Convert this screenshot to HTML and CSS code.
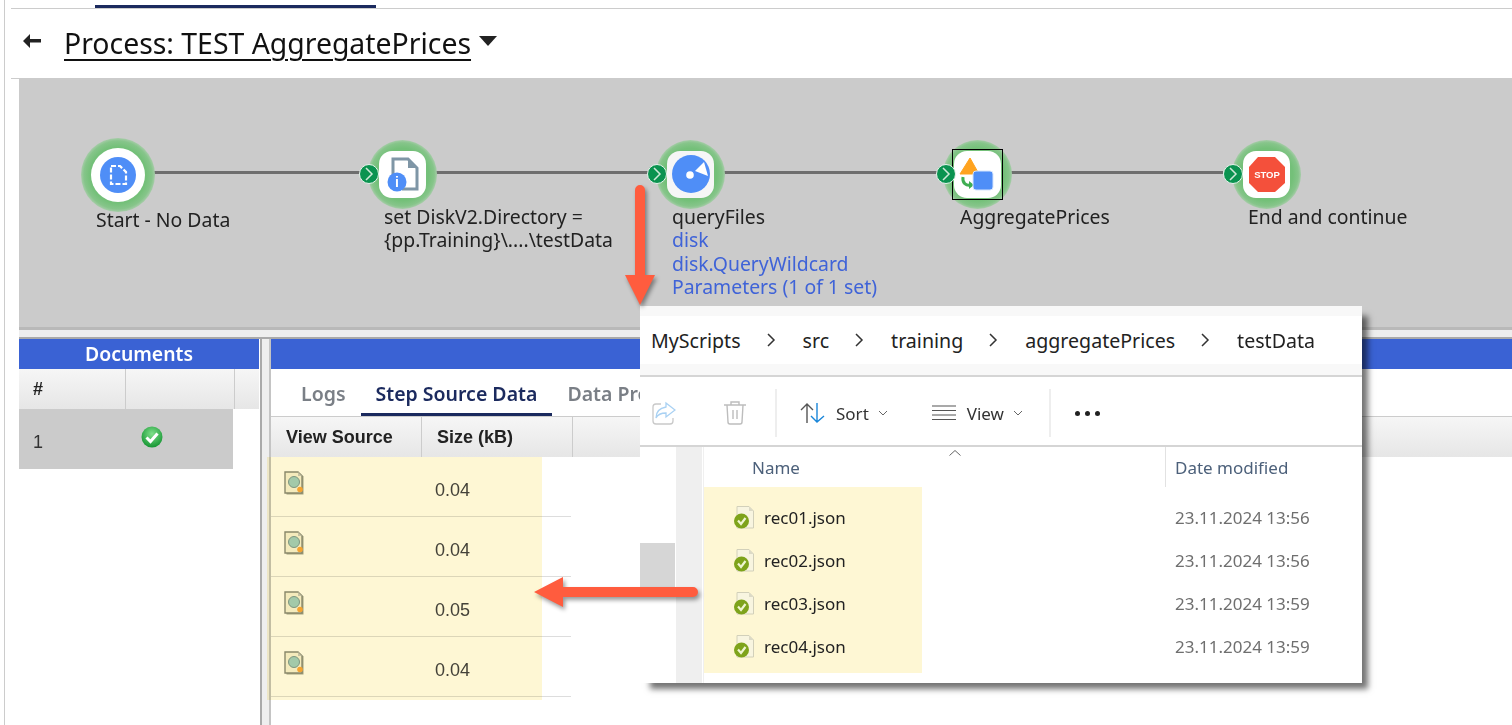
FILE: index.html
```html
<!DOCTYPE html>
<html lang="en">
<head>
    <meta charset="UTF-8">
    <meta name="viewport" content="width=device-width, initial-scale=1.0">
    <title>Process: TEST AggregatePrices</title>
    <link rel="stylesheet" href="styles.css">
</head>
<body>
    <div class="app">
        <div class="topbar"><div class="topbar-tab"></div></div>

        <header class="page-head">
            <svg class="back-icon" width="18" height="14" viewBox="0 0 18 14"><path d="M0 7 7 0v5h11v3.500H7V14z" fill="#222"/></svg>
            <h1 class="page-title">Process: TEST AggregatePrices</h1>
            <svg class="title-caret" width="18" height="10" viewBox="0 0 18 10"><path d="M0 0h18l-9 10z" fill="#222"/></svg>
        </header>

        <!-- Process diagram -->
        <section class="canvas">
            <div class="wire wire-1"></div>
            <div class="wire wire-2"></div>
            <div class="wire wire-3"></div>
            <div class="wire wire-4"></div>

            <div class="step step-1">
                <div class="halo halo-big">
                    <svg class="tile-round" width="54" height="54" viewBox="0 0 54 54">
                        <circle cx="27" cy="27" r="27" fill="#fff"/>
                        <circle cx="27" cy="27" r="18" fill="#4f8ef7"/>
                        <path d="M20 18h9l6 6v12H20z" fill="none" stroke="#fff" stroke-width="2.200" stroke-dasharray="5 2"/>
                    </svg>
                </div>
                <div class="step-label">Start - No Data</div>
            </div>

            <div class="step step-2">
                <div class="halo">
                    <div class="tile">
                        <svg width="47" height="47" viewBox="0 0 47 47">
                            <path d="M14 26V8h15l9 9v21H23" fill="none" stroke="#7f96a6" stroke-width="3"/>
                            <path d="M29 8v9h9z" fill="#7f96a6"/>
                            <circle cx="18" cy="31" r="9.500" fill="#4f8ef7"/>
                            <text x="18" y="36" class="badge-i">i</text>
                        </svg>
                    </div>
                </div>
                <div class="step-label">set DiskV2.Directory =<br>{pp.Training}\....\testData</div>
            </div>

            <div class="step step-3">
                <div class="halo">
                    <div class="tile tile-grey">
                        <svg width="47" height="47" viewBox="0 0 47 47">
                            <circle cx="24" cy="23" r="19" fill="#4f8ef7"/>
                            <circle cx="23" cy="24" r="3.800" fill="#fff"/>
                            <path d="M28 20 37 11l4 14z" fill="#fff"/>
                        </svg>
                    </div>
                </div>
                <div class="step-label">queryFiles
                    <a class="step-link">disk</a>
                    <a class="step-link">disk.QueryWildcard</a>
                    <a class="step-link">Parameters (1 of 1 set)</a>
                </div>
            </div>

            <div class="step step-4">
                <div class="halo">
                    <div class="tile tile-selected">
                        <svg width="47" height="47" viewBox="0 0 47 47">
                            <path d="M16 7 25 23H6z" fill="#ffa31f" stroke="#ffa31f" stroke-linejoin="round"/>
                            <path d="M9 26c-1 6 3 9 8 8" fill="none" stroke="#3fae52" stroke-width="3"/>
                            <path d="M15 30l5 4-5 4z" fill="#3fae52"/>
                            <rect x="19" y="20" width="20" height="19" rx="3" fill="#4f8ef7" stroke="#d6e5fd"/>
                        </svg>
                    </div>
                </div>
                <div class="step-label">AggregatePrices</div>
            </div>

            <div class="step step-5">
                <div class="halo">
                    <div class="tile">
                        <svg width="47" height="47" viewBox="0 0 47 47">
                            <path d="M15 6h17l10 10v16L32 41H15L6 32V16z" fill="#f4503b"/>
                            <text x="24" y="27" class="stop-text">STOP</text>
                        </svg>
                    </div>
                </div>
                <div class="step-label">End and continue</div>
            </div>

            <div class="port port-1"><svg width="10" height="14" viewBox="0 0 10 14"><path d="M2 1l6 6-6 6" fill="none" stroke="#cfe9d8" stroke-width="1.500"/></svg></div>
            <div class="port port-2"><svg width="10" height="14" viewBox="0 0 10 14"><path d="M2 1l6 6-6 6" fill="none" stroke="#cfe9d8" stroke-width="1.500"/></svg></div>
            <div class="port port-3"><svg width="10" height="14" viewBox="0 0 10 14"><path d="M2 1l6 6-6 6" fill="none" stroke="#cfe9d8" stroke-width="1.500"/></svg></div>
            <div class="port port-4"><svg width="10" height="14" viewBox="0 0 10 14"><path d="M2 1l6 6-6 6" fill="none" stroke="#cfe9d8" stroke-width="1.500"/></svg></div>
        </section>

        <div class="split-h"></div>

        <div class="panels">
            <!-- Documents -->
            <aside class="docs">
                <div class="panel-title">Documents</div>
                <div class="docs-head">
                    <div class="docs-num">#</div>
                    <div class="docs-status"></div>
                    <div class="docs-rest"></div>
                </div>
                <div class="docs-row">
                    <div class="docs-num">1</div>
                    <svg class="docs-check" width="22" height="22" viewBox="0 0 22 22">
                        <defs>
                            <radialGradient id="okGrad" cx="50%" cy="35%" r="70%">
                                <stop offset="0" stop-color="#7fe08a"/>
                                <stop offset="1" stop-color="#0d8f2c"/>
                            </radialGradient>
                        </defs>
                        <circle cx="11" cy="11" r="10.500" fill="url(#okGrad)"/>
                        <path d="M5.500 11.500 9.500 15.500 16.500 7.500" fill="none" stroke="#fff" stroke-width="3"/>
                    </svg>
                </div>
            </aside>

            <div class="split-v"></div>

            <!-- Step details -->
            <main class="details">
                <div class="panel-title"></div>
                <nav class="tabs">
                    <span class="tab">Logs</span>
                    <span class="tab tab-active">Step Source Data</span>
                    <span class="tab">Data Properties</span>
                </nav>
                <div class="src-head">
                    <div class="src-cell">View Source</div>
                    <div class="src-cell">Size (kB)</div>
                </div>
                <div class="src-row">
                    <svg class="src-icon" width="22" height="24"><use href="#srcDoc"/></svg>
                    <div class="src-size">0.04</div>
                </div>
                <div class="src-row">
                    <svg class="src-icon" width="22" height="24"><use href="#srcDoc"/></svg>
                    <div class="src-size">0.04</div>
                </div>
                <div class="src-row">
                    <svg class="src-icon" width="22" height="24"><use href="#srcDoc"/></svg>
                    <div class="src-size">0.05</div>
                </div>
                <div class="src-row">
                    <svg class="src-icon" width="22" height="24"><use href="#srcDoc"/></svg>
                    <div class="src-size">0.04</div>
                </div>
            </main>
        </div>
    </div>

    <div class="source-mark"></div>

    <!-- File explorer window pasted over the page -->
    <div class="explorer">
        <div class="crumbs">
            <div class="crumbs-inner">
                <span class="crumb">MyScripts</span>
                <svg class="crumb-sep" width="10" height="16" viewBox="0 0 10 16"><path d="M2 2l6 6-6 6" fill="none" stroke="#333" stroke-width="1.500"/></svg>
                <span class="crumb">src</span>
                <svg class="crumb-sep" width="10" height="16" viewBox="0 0 10 16"><path d="M2 2l6 6-6 6" fill="none" stroke="#333" stroke-width="1.500"/></svg>
                <span class="crumb">training</span>
                <svg class="crumb-sep" width="10" height="16" viewBox="0 0 10 16"><path d="M2 2l6 6-6 6" fill="none" stroke="#333" stroke-width="1.500"/></svg>
                <span class="crumb">aggregatePrices</span>
                <svg class="crumb-sep" width="10" height="16" viewBox="0 0 10 16"><path d="M2 2l6 6-6 6" fill="none" stroke="#333" stroke-width="1.500"/></svg>
                <span class="crumb">testData</span>
            </div>
        </div>

        <div class="toolbar">
            <svg class="tool-share" width="24" height="24" viewBox="0 0 24 24">
                <path d="M9 3H4a3 3 0 0 0-3 3v14a3 3 0 0 0 3 3h14a3 3 0 0 0 3-3v-3" fill="none" stroke="#c9c9c9" stroke-width="1.300"/>
                <path d="M14 2l9 7-9 7v-4c-5 0-8 1-10 5 0-7 4-10 10-11z" fill="#fff" stroke="#a9d1f3" stroke-width="1.300"/>
            </svg>
            <svg class="tool-trash" width="22" height="24" viewBox="0 0 22 24">
                <path d="M0 4h22M7 4V1h8v3M3 4l1 17a2 2 0 0 0 2 2h10a2 2 0 0 0 2-2l1-17M9 9v9M13 9v9" fill="none" stroke="#bdbdbd" stroke-width="1.400"/>
            </svg>
            <div class="tool-divider tool-divider-a"></div>
            <svg class="tool-sort" width="25" height="20" viewBox="0 0 25 20">
                <path d="M7 20V1M1 7l6-6 6 6" fill="none" stroke="#555" stroke-width="1.400"/>
                <path d="M17 0v19M11 13l6 6 7-6" fill="none" stroke="#1a86d9" stroke-width="1.400"/>
            </svg>
            <span class="tool-text">Sort</span>
            <svg class="tool-chev" width="10" height="6" viewBox="0 0 10 6"><path d="M1 1l4 4 4-4" fill="none" stroke="#666"/></svg>
            <svg class="tool-view" width="24" height="16" viewBox="0 0 24 16">
                <path d="M0 1h24M0 5.500h24M0 10h24M0 14.500h24" stroke="#555" stroke-width="1.200"/>
            </svg>
            <span class="tool-text">View</span>
            <svg class="tool-chev" width="10" height="6" viewBox="0 0 10 6"><path d="M1 1l4 4 4-4" fill="none" stroke="#666"/></svg>
            <div class="tool-divider tool-divider-b"></div>
            <div class="tool-more"><i></i><i></i><i></i></div>
        </div>

        <div class="ex-body">
            <div class="ex-gutter"><div class="ex-thumb"></div></div>
            <div class="ex-strip"></div>
            <div class="ex-main">
                <svg class="sort-caret" width="12" height="6" viewBox="0 0 12 6"><path d="M0.500 5.500 6 0.500l5.500 5" fill="none" stroke="#666"/></svg>
                <div class="ex-head">
                    <div class="ex-col-name">Name</div>
                    <div class="ex-col-date">Date modified</div>
                </div>
                <div class="ex-rows">
                    <div class="ex-row">
                        <svg class="file-icon" width="20" height="24"><use href="#jsonFile"/></svg>
                        <span class="file-name">rec01.json</span>
                        <span class="file-date">23.11.2024 13:56</span>
                    </div>
                    <div class="ex-row">
                        <svg class="file-icon" width="20" height="24"><use href="#jsonFile"/></svg>
                        <span class="file-name">rec02.json</span>
                        <span class="file-date">23.11.2024 13:56</span>
                    </div>
                    <div class="ex-row">
                        <svg class="file-icon" width="20" height="24"><use href="#jsonFile"/></svg>
                        <span class="file-name">rec03.json</span>
                        <span class="file-date">23.11.2024 13:59</span>
                    </div>
                    <div class="ex-row">
                        <svg class="file-icon" width="20" height="24"><use href="#jsonFile"/></svg>
                        <span class="file-name">rec04.json</span>
                        <span class="file-date">23.11.2024 13:59</span>
                    </div>
                </div>
            </div>
        </div>
    </div>

    <!-- Callout arrows -->
    <svg class="arrow arrow-down" width="30" height="122" viewBox="0 0 30 122">
        <path d="M15 1a5 5 0 0 1 5 5v85h10L15 121 0 91h10V6a5 5 0 0 1 5-5z" fill="#ff5c3e"/>
    </svg>
    <svg class="arrow arrow-left" width="164" height="30" viewBox="0 0 164 30">
        <path d="M0 15 29 0v10h130a5 5 0 0 1 0 10H29v10z" fill="#ff5c3e"/>
    </svg>

    <!-- Shared icons -->
    <svg class="icon-defs" width="0" height="0">
        <defs>
            <g id="srcDoc">
                <path d="M2.500 2.500h14l3 3v18h-17z" fill="#a4a796"/>
                <path d="M1 1h13l4 4v17H1z" fill="#f5f3e2" stroke="#8a8d80" stroke-width="1.400"/>
                <path d="M14 1v4h4z" fill="#c6c8c4"/>
                <circle cx="10" cy="11" r="5.500" fill="#a3d0cc" stroke="#7f9b98"/>
                <circle cx="16" cy="18.500" r="2.800" fill="#f4a93a"/>
            </g>
            <g id="jsonFile">
                <path d="M3 0.500h12l4.500 4.500v17H3z" fill="#f8f5e0" stroke="#d2d0ba"/>
                <path d="M15 0.500V5h4.500z" fill="#dcdac6"/>
                <circle cx="7.500" cy="15" r="7.500" fill="#7ea31b"/>
                <path d="M4 14.500 7 18 11.500 12" fill="none" stroke="#eef5d0" stroke-width="2.200"/>
            </g>
        </defs>
    </svg>
</body>
</html>
```

FILE: styles.css
```css
html, body {
    margin: 0;
    padding: 0;
    height: 725px;
    overflow: hidden;
    background: #fff;
}

body {
    position: relative;
    font-family: "Noto Sans", sans-serif;
    color: #222;
}

.app {
    margin-left: 4px;
    height: 725px;
    border-left: 1px solid #ccc;
    box-sizing: border-box;
}

/* Top */
.topbar {
    height: 9px;
    margin-left: 6px;
    border-bottom: 1px solid #ccc;
    box-sizing: border-box;
}

.topbar-tab {
    width: 281px;
    height: 3px;
    margin-left: 84px;
    position: relative;
    top: 5px;
    background: #1b2a5e;
}

.page-head {
    display: flex;
    align-items: flex-start;
    height: 70px;
    margin-left: 6px;
    border-bottom: 1px solid #ccc;
    box-sizing: border-box;
}

.back-icon {
    margin: 25px 0 0 12px;
}

.page-title {
    margin: 13px 0 0 23px;
    font-size: 28.400px;
    font-weight: 400;
    line-height: 42px;
    color: #111;
    text-decoration: underline;
    text-decoration-thickness: 2px;
    text-underline-offset: 5px;
}

.title-caret {
    margin: 27px 0 0 8px;
}

/* Diagram */
.canvas {
    position: relative;
    height: 249px;
    margin-left: 14px;
    margin-top: -1px;
    background: #cbcbcb;
}

.wire {
    position: absolute;
    top: 93px;
    height: 3px;
    background: #6e6e6e;
}

.wire-1 { left: 125px; width: 216px; }
.wire-2 { left: 408px; width: 222px; }
.wire-3 { left: 697px; width: 222px; }
.wire-4 { left: 984px; width: 220px; }

.step {
    position: absolute;
    top: 62px;
}

.step-1 { left: 62px; top: 60px; }
.step-2 { left: 349px; }
.step-3 { left: 637px; }
.step-4 { left: 924px; }
.step-5 { left: 1213px; }

.halo {
    display: flex;
    align-items: center;
    justify-content: center;
    width: 69px;
    height: 69px;
    border-radius: 50%;
    background: radial-gradient(circle closest-side, #74c079 76%, #86c58a 92%, #a6cca8 100%);
}

.halo-big {
    width: 74px;
    height: 74px;
}

.tile {
    position: relative;
    width: 47px;
    height: 47px;
    border-radius: 13px;
    background: #fff;
}

.tile svg {
    display: block;
}

.tile-grey {
    background: #f6f6f6;
}

.tile-selected::after {
    content: "";
    position: absolute;
    top: -2px;
    left: -2px;
    right: -2px;
    bottom: -2px;
    border: 1.500px solid #000;
}

.step-label {
    margin: -4px 0 0 16px;
    font-size: 19.400px;
    line-height: 23.300px;
    white-space: nowrap;
    color: #222;
}

.step-1 .step-label {
    margin: -4px 0 0 15px;
}

.step-4 .step-label {
    margin-left: 17px;
}

.step-link {
    display: block;
    color: #3f63d8;
}

.badge-i {
    font: 700 14px "Liberation Sans", sans-serif;
    fill: #fff;
    text-anchor: middle;
}

.stop-text {
    font: 700 9.500px "Liberation Sans", sans-serif;
    fill: #fff;
    text-anchor: middle;
}

.port {
    position: absolute;
    top: 86px;
    display: flex;
    align-items: center;
    justify-content: center;
    width: 20px;
    height: 20px;
    box-sizing: border-box;
    border: 1px solid #e8f3ec;
    border-radius: 50%;
    background: #0b9350;
}

.port-1 { left: 340px; }
.port-2 { left: 628px; }
.port-3 { left: 917px; }
.port-4 { left: 1204px; }

/* Horizontal splitter */
.split-h {
    height: 12px;
    margin-left: 14px;
    box-sizing: border-box;
    border-top: 3px solid #b9b9b9;
    border-bottom: 2px solid #a9a9a9;
    background: #eee;
}

.panels {
    display: flex;
    height: 386px;
    margin-left: 14px;
}

.panel-title {
    height: 30px;
    font-size: 19.400px;
    font-weight: 600;
    line-height: 30px;
    text-align: center;
    color: #fff;
    background: #3a62d4;
}

/* Documents */
.docs {
    width: 240px;
    flex: none;
}

.docs-head {
    display: flex;
    height: 40px;
    background: linear-gradient(#f6f6f6, #e6e6e6);
}

.docs-num {
    width: 107px;
    padding-left: 14px;
    box-sizing: border-box;
    font-family: "Liberation Sans", sans-serif;
    font-size: 18px;
}

.docs-head .docs-num {
    font-weight: 700;
    line-height: 40px;
    border-right: 1px solid #ccc;
}

.docs-status {
    width: 108px;
    border-right: 1px solid #ccc;
}

.docs-rest {
    flex: 1;
}

.docs-row {
    display: flex;
    width: 214px;
    height: 60px;
    background: #cbcbcb;
}

.docs-row .docs-num {
    padding-top: 23px;
    line-height: 21px;
    color: #333;
}

.docs-check {
    margin: 17px 0 0 15px;
}

/* Vertical splitter */
.split-v {
    width: 11px;
    flex: none;
    box-sizing: border-box;
    margin-left: 1px;
    border-left: 2px solid #a9a9a9;
    border-right: 2px solid #c4c4c4;
    background: #eee;
}

/* Step details */
.details {
    flex: 1;
    min-width: 0;
}

.tabs {
    display: flex;
    height: 48px;
    box-sizing: border-box;
    padding-left: 15px;
    border-bottom: 1px solid #ccc;
}

.tab {
    height: 47px;
    padding: 0 15px;
    box-sizing: border-box;
    font-size: 19.500px;
    font-weight: 600;
    line-height: 50px;
    color: #7a7f86;
    white-space: nowrap;
}

.tab-active {
    color: #1b2a5e;
    border-bottom: 3px solid #1b2a5e;
}

.src-head {
    display: flex;
    height: 40px;
    background: linear-gradient(#f6f6f6, #e6e6e6);
}

.src-cell {
    width: 151px;
    padding-left: 15px;
    box-sizing: border-box;
    border-right: 1px solid #ccc;
    font-family: "Liberation Sans", sans-serif;
    font-size: 18px;
    font-weight: 700;
    line-height: 40px;
    color: #222;
}

.src-row {
    display: flex;
    width: 300px;
    height: 60px;
    box-sizing: border-box;
    border-bottom: 1px solid #ddd;
}

.src-icon {
    flex: none;
    margin: 14px 0 0 13px;
}

.src-size {
    margin: 23px 0 0 129px;
    font-family: "Liberation Sans", sans-serif;
    font-size: 18px;
    line-height: 21px;
    color: #444;
}

/* Yellow highlight over the source rows */
.source-mark {
    position: absolute;
    left: 267px;
    top: 457px;
    width: 275px;
    height: 243px;
    background: #fef7d4;
    mix-blend-mode: multiply;
}

/* Explorer window */
.explorer {
    position: absolute;
    left: 640px;
    top: 306px;
    width: 722px;
    height: 377px;
    display: flex;
    flex-direction: column;
    background: #fff;
    box-shadow: 8px 8px 6px -2px rgba(0, 0, 0, 0.55);
    font-family: "Noto Sans", sans-serif;
}

.crumbs {
    height: 71px;
    flex: none;
    box-sizing: border-box;
    padding: 10px 0 11px;
    border-bottom: 2px solid #d5d5d5;
    background: #f8f8f8;
}

.crumbs-inner {
    display: flex;
    align-items: center;
    height: 48px;
    padding-left: 11px;
    background: #fff;
}

.crumb {
    font-size: 19.600px;
    color: #222;
    white-space: nowrap;
}

.crumb-sep {
    margin: 0 27px 0 25px;
}

.toolbar {
    display: flex;
    align-items: center;
    height: 70px;
    flex: none;
    box-sizing: border-box;
    padding-top: 4px;
    border-bottom: 2px solid #d5d5d5;
}

.tool-share {
    margin-left: 12px;
}

.tool-trash {
    margin-left: 48px;
}

.tool-divider {
    width: 2px;
    height: 48px;
    background: #eee;
}

.tool-divider-a {
    margin: 0 23px 0 29px;
}

.tool-divider-b {
    margin: 0 24px 0 26px;
}

.tool-sort {
    flex: none;
}

.tool-text {
    margin-left: 11px;
    font-size: 17px;
    color: #333;
}

.tool-chev {
    margin-left: 9px;
}

.tool-view {
    margin-left: 44px;
}

.tool-more {
    display: flex;
    gap: 5px;
}

.tool-more i {
    width: 5px;
    height: 5px;
    border-radius: 50%;
    background: #222;
}

.ex-body {
    display: flex;
    flex: 1;
}

.ex-gutter {
    width: 36px;
    flex: none;
    padding-top: 96px;
    box-sizing: border-box;
}

.ex-thumb {
    width: 35px;
    height: 44px;
    background: #d6d6d6;
}

.ex-strip {
    width: 26px;
    flex: none;
    background: #efefef;
}

.ex-main {
    position: relative;
    flex: 1;
    margin-left: 1px;
    border-left: 1px solid #f0f0f0;
}

.sort-caret {
    position: absolute;
    left: 245px;
    top: 3px;
}

.ex-head {
    display: flex;
    height: 40px;
    font-size: 17px;
    line-height: 42px;
    color: #4c607a;
}

.ex-col-name {
    width: 462px;
    padding-left: 48px;
    box-sizing: border-box;
    border-right: 1px solid #e2e2e2;
}

.ex-col-date {
    padding-left: 9px;
}

.ex-rows {
    position: relative;
    padding-top: 9px;
    height: 186px;
    box-sizing: border-box;
}

.ex-rows::before {
    content: "";
    position: absolute;
    left: 0;
    top: 0;
    width: 218px;
    height: 186px;
    background: #fef7d4;
}

.ex-row {
    position: relative;
    display: flex;
    align-items: center;
    height: 43px;
    font-size: 17px;
}

.file-icon {
    margin-left: 30px;
    flex: none;
}

.file-name {
    width: 411px;
    margin-left: 10px;
    color: #222;
}

.file-date {
    color: #6f6f6f;
}

/* Arrows */
.arrow {
    position: absolute;
    filter: drop-shadow(2px 3px 2px rgba(0, 0, 0, 0.4));
}

.arrow-down {
    left: 625px;
    top: 184px;
}

.arrow-left {
    left: 534px;
    top: 577px;
}

.icon-defs {
    position: absolute;
}
```
